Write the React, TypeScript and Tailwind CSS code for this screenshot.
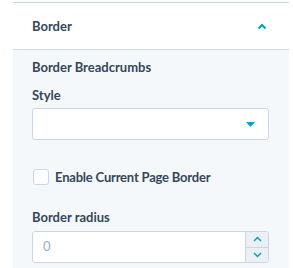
import React from "react";

const App = () => {
  return (
    <div className="h-[268px] w-[293px] bg-white pl-[13px] pr-[4px] pt-[2px] font-['Lato',sans-serif] text-[#33475b]">
      <div className="border-t border-[#cbd6e2]">
        <div className="flex h-[47px] items-center justify-between border-b border-[#cbd6e2] bg-white pl-[19px] pr-[22px]">
          <span className="pt-[2px] text-[13px] font-bold">Border</span>
          <svg width="10" height="7" viewBox="0 0 10 7" fill="none">
            <path d="M1.5 5.5 L5 2 L8.5 5.5" stroke="#00a4bd" strokeWidth="2.2" />
          </svg>
        </div>
        <div className="h-[218px] bg-[#f5f8fa] px-[19px] pt-[8px]">
          <div className="text-[13px] font-bold leading-[18px]">Border Breadcrumbs</div>
          <div className="mt-[10px] text-[13px] font-bold leading-[18px]">Style</div>
          <div className="mt-[4px] flex h-[32px] w-[237px] items-center justify-end rounded-[3px] border border-[#cbd6e2] bg-white pr-[13px]">
            <svg width="9" height="5" viewBox="0 0 9 5">
              <path d="M0 0 H9 L4.5 5 Z" fill="#00a4bd" />
            </svg>
          </div>
          <label className="mt-[28px] flex items-center gap-[6px] pl-[1px]">
            <span className="h-[16px] w-[16px] rounded-[3px] border border-[#cbd6e2] bg-white" />
            <span className="text-[13px] font-bold leading-[18px] tracking-[-0.2px]">Enable Current Page Border</span>
          </label>
          <div className="mt-[22px] text-[13px] font-bold leading-[18px]">Border radius</div>
          <div className="mt-[5px] flex h-[32px] w-[237px] overflow-hidden rounded-[3px] border border-[#cbd6e2] bg-white">
            <div className="flex flex-1 items-center pl-[10px] text-[13px] text-[#99afc4]">0</div>
            <div className="flex w-[23px] flex-col border-l border-[#cbd6e2] bg-[#eaf0f6]">
              <div className="flex flex-1 items-center justify-center border-b border-[#cbd6e2]">
                <svg width="9" height="6" viewBox="0 0 9 6" fill="none">
                  <path d="M1 5 L4.5 1.5 L8 5" stroke="#00a4bd" strokeWidth="1.5" />
                </svg>
              </div>
              <div className="flex flex-1 items-center justify-center">
                <svg width="9" height="6" viewBox="0 0 9 6" fill="none">
                  <path d="M1 1 L4.5 4.5 L8 1" stroke="#00a4bd" strokeWidth="1.5" />
                </svg>
              </div>
            </div>
          </div>
        </div>
      </div>
    </div>
  );
};

export default App;
